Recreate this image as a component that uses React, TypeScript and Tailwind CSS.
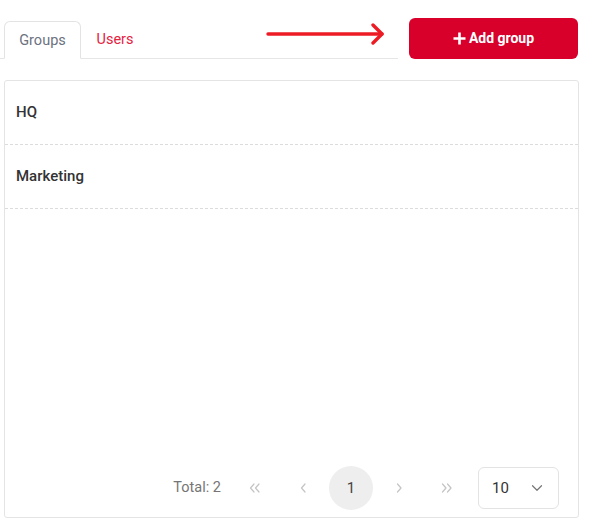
import { ChevronDown } from 'lucide-react'

const groups = ['HQ', 'Marketing']

function Chev({ dir, double }: { dir: 'left' | 'right'; double?: boolean }) {
  // small thin angle glyphs used by the pager
  const one = dir === 'left' ? 'M5 1 L1.5 5 L5 9' : 'M1.5 1 L5 5 L1.5 9'
  return (
    <svg width={double ? 12 : 7} height="10" viewBox={double ? '0 0 12 10' : '0 0 7 10'} fill="none"
      stroke="#c4c4c4" strokeWidth="1.2" strokeLinecap="round" strokeLinejoin="round">
      <path d={one} />
      {double && <path d={one} transform="translate(5 0)" />}
    </svg>
  )
}

export default function App() {
  return (
    <div className="w-[594px] h-[527px] bg-white text-[#333] font-['Roboto','Liberation_Sans',sans-serif]">
      <div className="flex items-end pt-[17px] pr-[16px]">
        <div className="flex-1 flex items-end border-b border-[#e6e6e6] relative h-[42px] mr-[11px]">
          <div className="ml-[4px] h-[38px] w-[77px] -mb-px pt-px flex items-center justify-center rounded-t-[6px] border border-[#e3e3e3] border-b-white bg-white text-[14.5px] text-[#6b7280]">
            Groups
          </div>
          <div className="h-[38px] w-[68px] pt-[2px] flex items-center justify-center text-[14.5px] text-[#e5233f]">
            Users
          </div>
          <svg className="absolute left-[265px] top-[6px]" width="122" height="24" viewBox="0 0 122 24" fill="none"
            stroke="#ed1c24" strokeWidth="3.4" strokeLinecap="round" strokeLinejoin="round">
            <path d="M3 11 L117 11" />
            <path d="M108 2 L117 11 L108 20" />
          </svg>
        </div>
        <button className="w-[169px] h-[41px] rounded-[6px] bg-[#d8002b] text-white font-bold text-[14px] flex items-center justify-center gap-[3px]">
          <svg width="13" height="13" viewBox="0 0 13 13" stroke="white" strokeWidth="2.6">
            <path d="M6.5 0.5 V12.5 M0.5 6.5 H12.5" />
          </svg>
          Add group
        </button>
      </div>

      <div className="ml-[4px] mt-[21px] w-[575px] h-[438px] border border-[#e4e4e4] rounded-[3px] flex flex-col">
        <div className="flex-1">
          {groups.map((g) => (
            <div key={g} className="h-[64px] flex items-center px-[11px] border-b border-dashed border-[#dcdcdc] text-[15px] font-medium text-[#333]">
              {g}
            </div>
          ))}
        </div>
        <div className="flex items-center justify-end pr-[19px] pb-[7px]">
          <span className="text-[14.5px] text-[#757575] mr-[12px]">Total: 2</span>
          <div className="flex items-center gap-[4px]">
            <div className="w-[44px] h-[44px] flex items-center justify-center"><Chev dir="left" double /></div>
            <div className="w-[44px] h-[44px] flex items-center justify-center"><Chev dir="left" /></div>
            <div className="w-[44px] h-[44px] rounded-full bg-[#eeeeee] flex items-center justify-center text-[15px] text-[#444]">1</div>
            <div className="w-[44px] h-[44px] flex items-center justify-center"><Chev dir="right" /></div>
            <div className="w-[44px] h-[44px] flex items-center justify-center"><Chev dir="right" double /></div>
          </div>
          <div className="ml-[9px] w-[81px] h-[42px] border border-[#e3e3e3] rounded-[6px] flex items-center justify-between pl-[13px] pr-[12px] text-[15px] text-[#333]">
            10
            <ChevronDown size={18} strokeWidth={1.6} className="text-[#777]" />
          </div>
        </div>
      </div>
    </div>
  )
}
